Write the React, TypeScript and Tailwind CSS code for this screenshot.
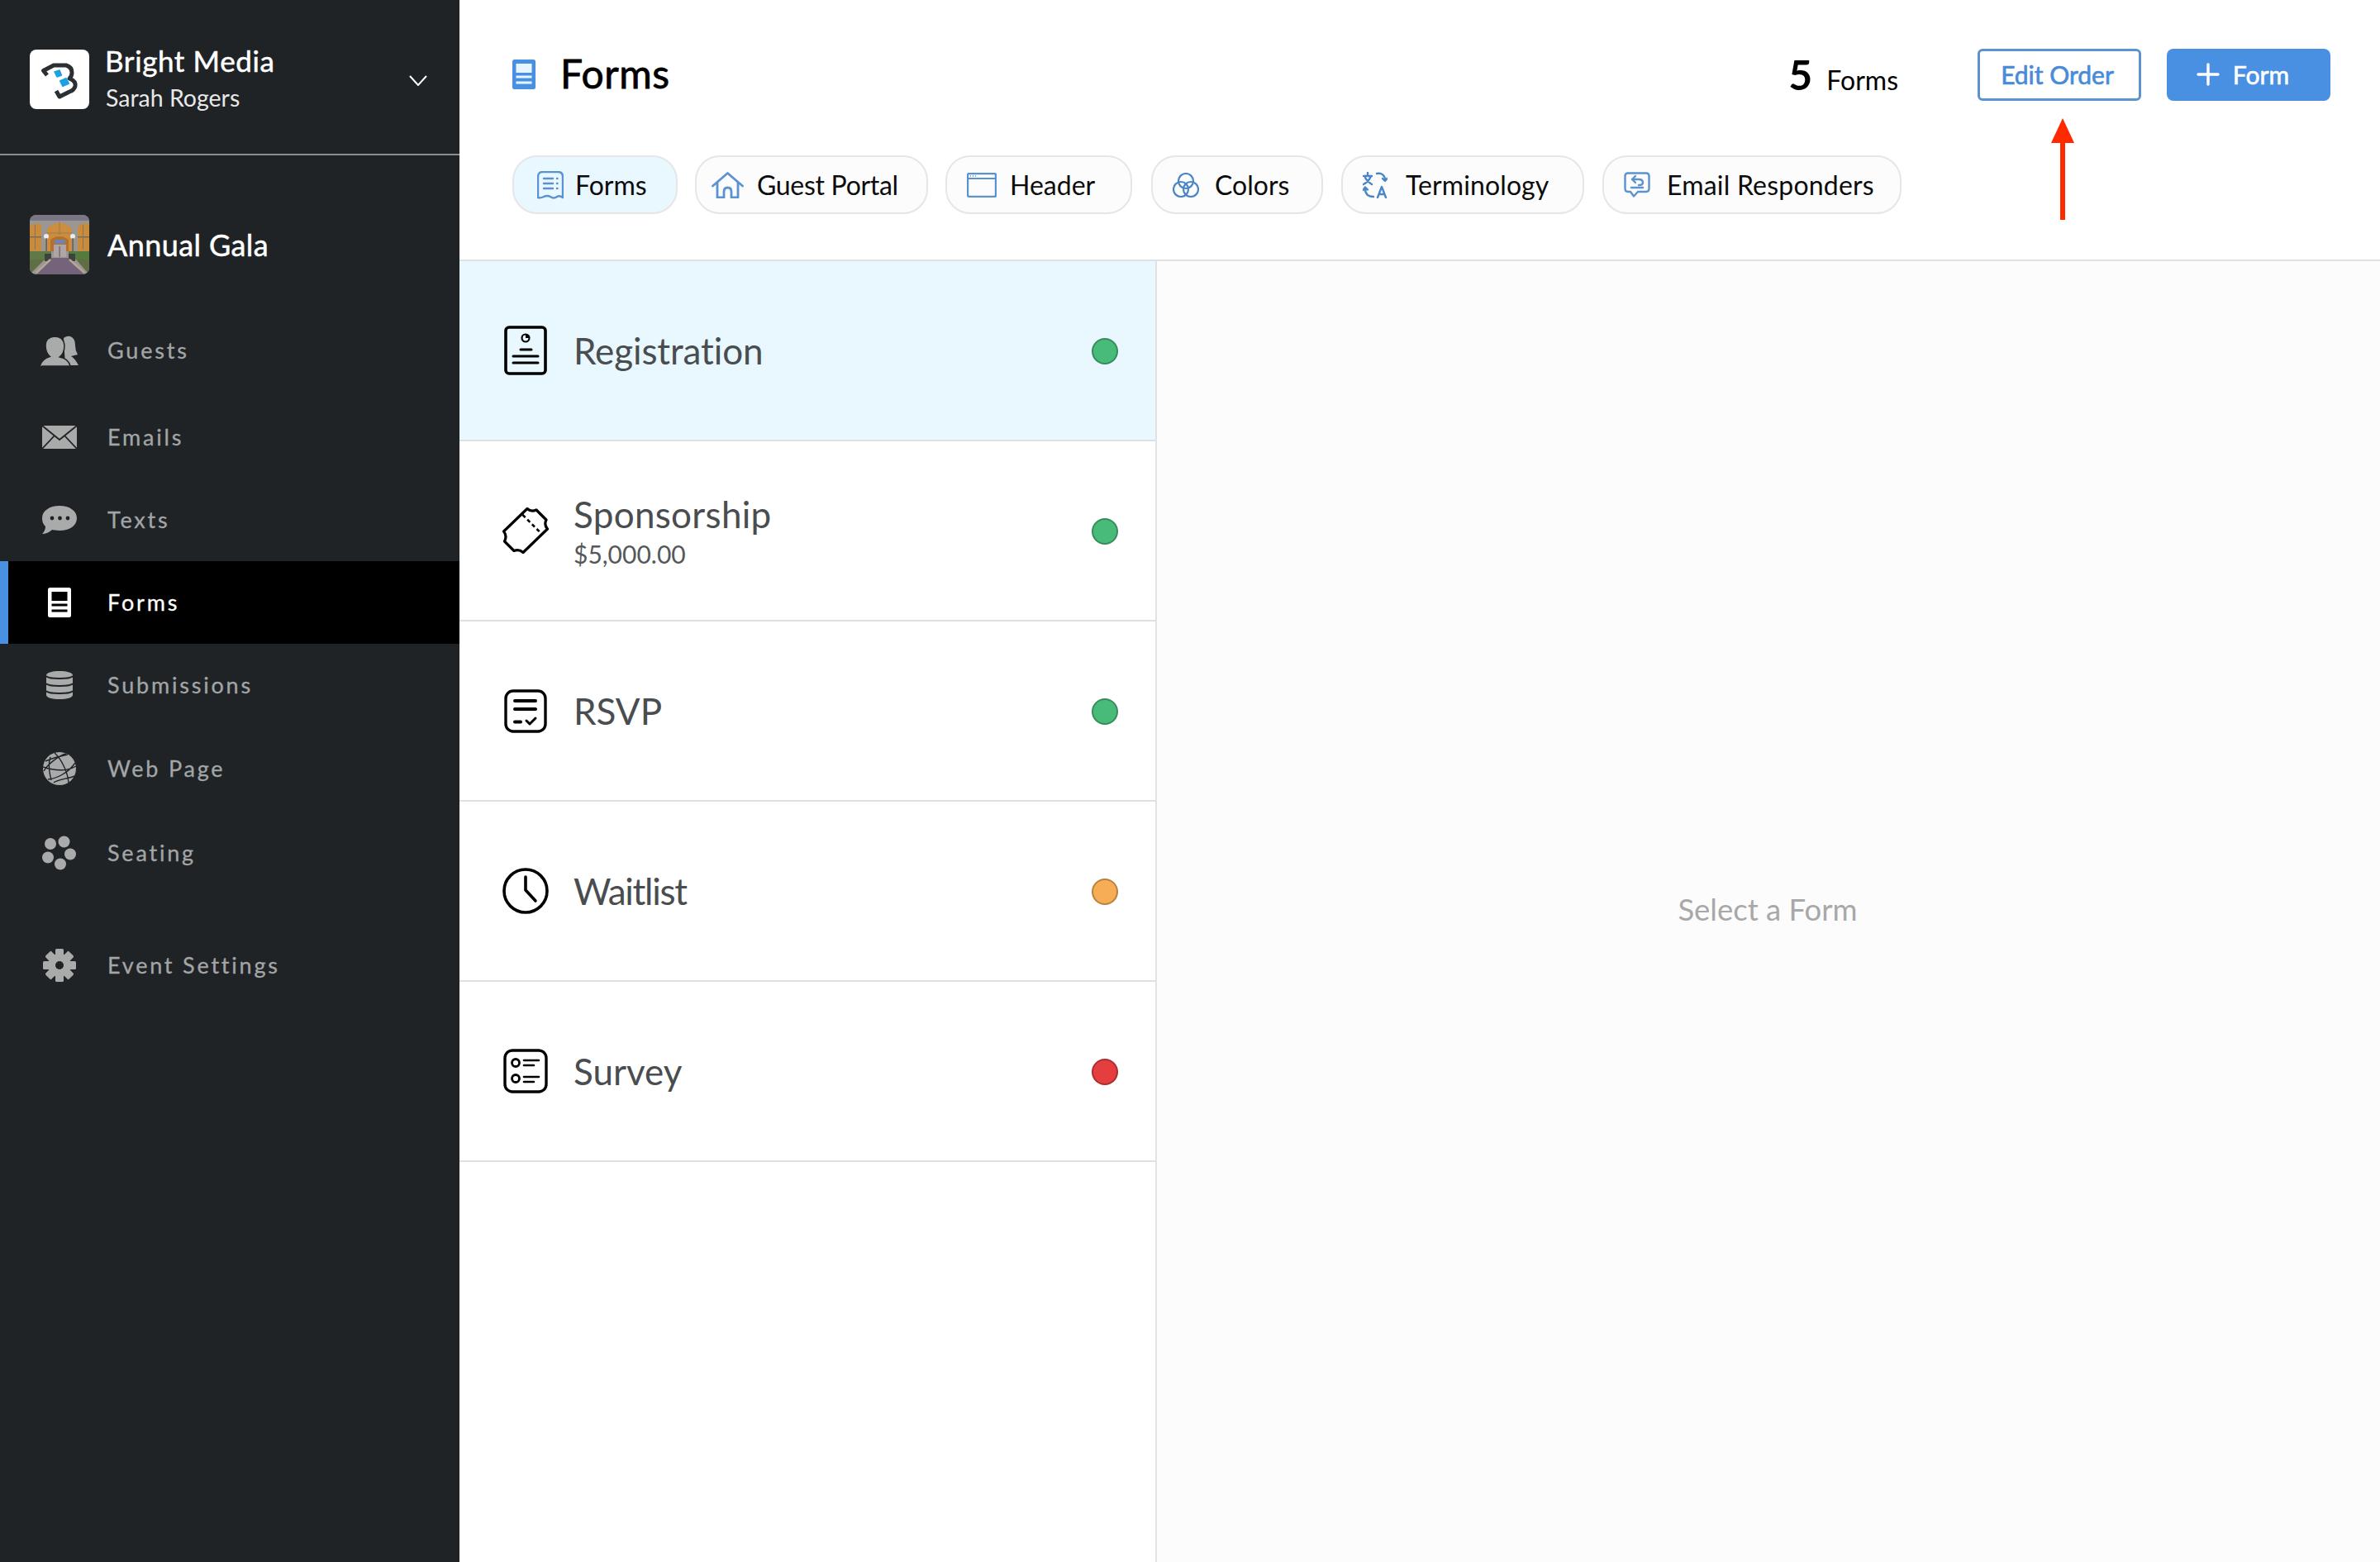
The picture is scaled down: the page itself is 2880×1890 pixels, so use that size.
import React from "react";

const SIDE = "#a9abab";
const DARK = "#1f2326";

function LogoMark() {
  return (
    <svg width="72" height="72" viewBox="0 0 72 72">
      <rect width="72" height="72" rx="8" fill="#fff" />
      <path d="M21 31 L16.5 25.5 L29 19 H44 Q51 21 51 28 Q51 32 48 35 Q56 38 55 44 Q54 49 48 51 L36 57 L32 50" fill="none" stroke="#2c3033" strokeWidth="5" strokeLinejoin="round" />
      <path d="M30 27 L36 25 L38.5 31 L33 33 Z" fill="#1ba3e0" stroke="#1ba3e0" strokeWidth="1.5" strokeLinejoin="round" />
      <path d="M37 38 L44 35 L47 41 L40 44 Z" fill="#1ba3e0" stroke="#1ba3e0" strokeWidth="2" strokeLinejoin="round" />
    </svg>
  );
}

function GalaThumb() {
  return (
    <svg width="72" height="72" viewBox="0 0 72 72">
      <defs>
        <clipPath id="galaclip"><rect width="72" height="72" rx="8" /></clipPath>
      </defs>
      <g clipPath="url(#galaclip)">
        <rect width="72" height="72" fill="#9a9694" />
        <rect width="72" height="7" fill="#7a7684" />
        <path d="M0 44 V14 Q7 8 14 12 V44 Z" fill="#c98c3c" />
        <path d="M21 44 V17 Q36 2 51 17 V44 Z" fill="#cc8d3c" />
        <path d="M25 30 Q36 22 47 30 V44 H25 Z" fill="#b5702f" />
        <path d="M58 44 V14 Q64 9 72 11 V44 Z" fill="#c98c3c" />
        <rect x="0" y="26" width="14" height="1.5" fill="#7d6a54" />
        <rect x="58" y="26" width="14" height="1.5" fill="#7d6a54" />
        <path d="M21 22 H51 M36 8 V24" stroke="#8a7860" strokeWidth="0.8" />
        <rect x="6" y="12" width="1" height="30" fill="#85745f" />
        <rect x="64" y="12" width="1" height="30" fill="#85745f" />
        <circle cx="20" cy="26" r="3" fill="#e8edf2" />
        <circle cx="52" cy="26" r="3" fill="#e8edf2" />
        <rect x="19.5" y="28" width="1.2" height="18" fill="#4a524c" />
        <rect x="51.5" y="28" width="1.2" height="18" fill="#4a524c" />
        <rect x="29" y="36" width="15" height="15" fill="#b0a4a4" />
        <rect x="30" y="30" width="13" height="5" fill="#6c84b0" />
        <rect x="35.5" y="38" width="1.2" height="13" fill="#6b6060" />
        <rect x="0" y="44" width="26" height="10" fill="#5f7a44" />
        <rect x="47" y="44" width="25" height="10" fill="#557a3e" />
        <rect x="18" y="47" width="8" height="9" fill="#3d423a" />
        <rect x="47" y="47" width="8" height="9" fill="#3d423a" />
        <path d="M0 54 H18 L2 70 H0 Z" fill="#5f6e44" />
        <path d="M72 54 H56 L70 70 H72 Z" fill="#5f6e44" />
        <path d="M26 52 H47 L67 72 H8 Z" fill="#75637b" />
        <path d="M25 54 L8 70" stroke="#b5a893" strokeWidth="2.5" />
        <path d="M48 54 L66 70" stroke="#b5a893" strokeWidth="2.5" />
      </g>
    </svg>
  );
}

function GuestsIcon() {
  return (
    <svg width="46" height="37" viewBox="0 0 46 37">
      <path d="M28 3 Q32 0 36 1 Q42 3 42 12 Q42 18 45 23 L37 25 Q42 28 46 36 H30 Z" fill={SIDE} />
      <path d="M17 1 Q28 1 29 12 Q29 22 23 26 Q34 28 36 37 H0 Q2 29 12 26 Q6 21 6 12 Q6 2 17 1 Z" fill={SIDE} stroke={DARK} strokeWidth="1.5" />
      <path d="M0 37 Q2 29 12 26 L23 26" fill={SIDE} />
    </svg>
  );
}

function EmailsIcon() {
  return (
    <svg width="42" height="28" viewBox="0 0 42 28">
      <rect width="42" height="28" fill={SIDE} />
      <path d="M0 0 L21 17 L42 0 M0 28 L15 12 M42 28 L27 12" fill="none" stroke={DARK} strokeWidth="1.8" />
    </svg>
  );
}

function TextsIcon() {
  return (
    <svg width="42" height="34" viewBox="0 0 42 34">
      <path d="M21 0 C33 0 42 6 42 15 C42 24 33 30 21 30 C17 30 14 29 12 29 C9 32 4 34 0 34 C3 31 4 28 4 25 C1 22 0 19 0 15 C0 6 9 0 21 0 Z" fill={SIDE} />
      <circle cx="12" cy="15" r="2.4" fill={DARK} />
      <circle cx="21.5" cy="15" r="2.4" fill={DARK} />
      <circle cx="31" cy="15" r="2.4" fill={DARK} />
    </svg>
  );
}

function DocIcon({ fill, cut }: { fill: string; cut: string }) {
  return (
    <svg width="28" height="36" viewBox="0 0 28 36">
      <rect width="28" height="36" rx="2.5" fill={fill} />
      <rect x="4.5" y="5" width="19" height="11" fill={cut} />
      <rect x="4.5" y="19.5" width="19" height="3" fill={cut} />
      <rect x="4.5" y="26.5" width="19" height="3" fill={cut} />
    </svg>
  );
}

function DbIcon() {
  return (
    <svg width="32" height="34" viewBox="0 0 32 34">
      <path d="M0 5 C0 2 7 0 16 0 C25 0 32 2 32 5 V29 C32 32 25 34 16 34 C7 34 0 32 0 29 Z" fill={SIDE} />
      <path d="M0 6 C2 10 30 10 32 6 M0 15 C2 19 30 19 32 15 M0 24 C2 28 30 28 32 24" fill="none" stroke={DARK} strokeWidth="2" />
    </svg>
  );
}

function GlobeIcon() {
  return (
    <svg width="40" height="40" viewBox="0 0 40 40">
      <circle cx="20" cy="20" r="20" fill={SIDE} />
      <path d="M3 11 C10 8 20 5 30 3 M1 23 C6 14 20 4 28 2 M14 1 C22 8 30 24 31 37 M0 18 C12 22 28 24 40 17 M6 33 C16 32 30 26 39 13 M13 37 C18 33 32 32 38 29 M9 6 C6 14 8 26 10 34" fill="none" stroke={DARK} strokeWidth="1.4" />
    </svg>
  );
}

function SeatingIcon() {
  return (
    <svg width="42" height="42" viewBox="0 0 42 42">
      <circle cx="10" cy="10" r="7" fill={SIDE} />
      <circle cx="26.5" cy="7.5" r="7" fill={SIDE} />
      <circle cx="34" cy="22.5" r="7" fill={SIDE} />
      <circle cx="22" cy="34.5" r="7" fill={SIDE} />
      <circle cx="7" cy="26.5" r="7" fill={SIDE} />
    </svg>
  );
}

function GearIcon() {
  const angles = [0, 45, 90, 135, 180, 225, 270, 315];
  return (
    <svg width="40" height="40" viewBox="0 0 40 40">
      {angles.map((a) => (
        <rect key={a} x="15" y="0" width="10" height="10" rx="1.5" fill={SIDE} transform={`rotate(${a} 20 20)`} />
      ))}
      <circle cx="20" cy="20" r="14" fill={SIDE} />
      <circle cx="20" cy="20" r="5" fill={DARK} />
    </svg>
  );
}

const BLUE = "#5b92d0";

function ReceiptIcon() {
  return (
    <svg width="32" height="34" viewBox="0 0 32 34" fill="none" stroke={BLUE} strokeWidth="2.4" strokeLinecap="round" strokeLinejoin="round">
      <path d="M1 32 V7 Q1 1 7 1 H25 Q31 1 31 7 V32 Q27 29 24 31 Q20 34 16 31 Q12 29 8 31 Q4 33 1 32 Z" />
      <path d="M8 9 H19 M8 15 H19 M8 21 H19" />
      <path d="M24 9 H24.5 M24 15 H24.5 M24 21 H24.5" />
    </svg>
  );
}

function HouseIcon() {
  return (
    <svg width="39" height="32" viewBox="0 0 39 32" fill="none" stroke={BLUE} strokeWidth="2.8" strokeLinecap="round" strokeLinejoin="round">
      <path d="M1.5 17 L19.5 1.5 L37.5 17" />
      <path d="M7 13 V31 H15 V24 Q15 19 19.5 19 Q24 19 24 24 V31 H32 V13" />
    </svg>
  );
}

function WindowIcon() {
  return (
    <svg width="36" height="30" viewBox="0 0 36 30" fill="none">
      <rect x="1" y="1" width="34" height="28" rx="2" stroke={BLUE} strokeWidth="2.4" />
      <path d="M1 7 H35" stroke={BLUE} strokeWidth="2" />
      <path d="M4 4 H5 M7 4 H8 M10 4 H11" stroke={BLUE} strokeWidth="1.4" />
    </svg>
  );
}

function ColorsIcon() {
  return (
    <svg width="32" height="30" viewBox="0 0 32 30" fill="none" stroke="#4a86c5" strokeWidth="2.2">
      <circle cx="16" cy="10" r="9" />
      <circle cx="10" cy="20" r="9" />
      <circle cx="22" cy="20" r="9" />
    </svg>
  );
}

function TermIcon() {
  return (
    <svg width="30" height="32" viewBox="0 0 30 32" fill="none" stroke="#4a86c5" strokeWidth="2.4" strokeLinecap="round" strokeLinejoin="round">
      <path d="M1 5 H11 M6 1 V5 M10 5 C8 10 5 13 1 15 M3 7 C5 11 8 13 11 15" />
      <path d="M17 2 C23 1 27 4 27 10 M24 8 L27 11 L29.5 8" />
      <path d="M13 30 C7 30 3 27 3 20 M0.5 22 L3 18.5 L6 21.5" />
      <path d="M18 31 L23 18 L28 31 M20 27 H26" />
    </svg>
  );
}

function ReplyIcon() {
  return (
    <svg width="32" height="31" viewBox="0 0 32 31" fill="none" stroke={BLUE} strokeWidth="2.4" strokeLinecap="round" strokeLinejoin="round">
      <path d="M5 1.5 H27 Q30.5 1.5 30.5 5 V20 Q30.5 24 27 24 H17 L12 29.5 L8 24 H5 Q1.5 24 1.5 20 V5 Q1.5 1.5 5 1.5 Z" />
      <path d="M14 5 L10 9 L14 13 M10 9 H18 Q23 9 23 13 Q23 16 18 16" />
      <path d="M9 19 H23" />
    </svg>
  );
}

function RegIcon() {
  return (
    <svg width="52" height="60" viewBox="0 0 52 60" fill="none" stroke="#000" strokeWidth="3.6" strokeLinecap="round">
      <rect x="2" y="2" width="48" height="56" rx="4" />
      <circle cx="26" cy="15" r="4.5" strokeWidth="2.2" />
      <path d="M26 15 L26 10.5 A4.5 4.5 0 0 1 30.5 15 Z" fill="#000" stroke="none" />
      <path d="M20 29 H33 M11 37 H41 M11 45 H41" strokeWidth="3" />
    </svg>
  );
}

function TicketIcon() {
  return (
    <svg width="56" height="56" viewBox="0 0 56 56" fill="none" stroke="#000" strokeWidth="3.2" strokeLinejoin="round">
      <path d="M30 1.5 Q35 6 41 3 L53 15 Q50 21 54.5 26 L25 54.5 Q20 50 14 52.5 L2.5 41 Q6 34 1.5 29 Z" />
      <path d="M24.5 9 L47 31.5" strokeWidth="2.6" strokeDasharray="4.5 3.5" />
    </svg>
  );
}

function RsvpIcon() {
  return (
    <svg width="52" height="53" viewBox="0 0 52 53" fill="none" stroke="#000" strokeWidth="3.4" strokeLinecap="round" strokeLinejoin="round">
      <rect x="2" y="2" width="48" height="49" rx="9" />
      <path d="M13 14 H38 M13 24 H38" strokeWidth="4" />
      <path d="M13 39.5 H20" strokeWidth="4" />
      <path d="M27 38 L31 42 L38 35" strokeWidth="3" />
    </svg>
  );
}

function ClockIcon() {
  return (
    <svg width="56" height="56" viewBox="0 0 56 56" fill="none" stroke="#000" strokeWidth="3.6" strokeLinecap="round" strokeLinejoin="round">
      <circle cx="28" cy="28" r="26" />
      <path d="M28 11 V27 L40 40" />
    </svg>
  );
}

function SurveyIcon() {
  return (
    <svg width="54" height="54" viewBox="0 0 54 54" fill="none" stroke="#000" strokeWidth="3.4" strokeLinecap="round">
      <rect x="2" y="2" width="50" height="50" rx="9" />
      <circle cx="15" cy="17" r="4.5" strokeWidth="2.8" />
      <circle cx="15" cy="36" r="4.5" strokeWidth="2.8" />
      <path d="M25 14 H43 M25 20 H37 M25 34 H43 M25 40 H37" strokeWidth="2.6" />
    </svg>
  );
}

const nav = [
  { label: "Guests", icon: <GuestsIcon />, cls: "mt-[42px]" },
  { label: "Emails", icon: <EmailsIcon />, cls: "mt-[5px]" },
  { label: "Texts", icon: <TextsIcon />, cls: "" },
  { label: "Forms", icon: <DocIcon fill="#ffffff" cut="#000000" />, cls: "", active: true },
  { label: "Submissions", icon: <DbIcon />, cls: "" },
  { label: "Web Page", icon: <GlobeIcon />, cls: "mt-[1px]" },
  { label: "Seating", icon: <SeatingIcon />, cls: "mt-[2px]" },
  { label: "Event Settings", icon: <GearIcon />, cls: "mt-[36px]" },
];

const pills = [
  { label: "Forms", icon: <ReceiptIcon />, w: "w-[200px] pl-[28px] gap-[14px] bg-[#e9f7ff]" },
  { label: "Guest Portal", icon: <HouseIcon />, w: "ml-[21px] w-[282px] pl-[18px] gap-[16px] tracking-[-0.3px] bg-[#fcfcfc]" },
  { label: "Header", icon: <WindowIcon />, w: "ml-[21px] w-[226px] pl-[24px] gap-[16px] bg-[#fcfcfc]" },
  { label: "Colors", icon: <ColorsIcon />, w: "ml-[23px] w-[208px] pl-[24px] gap-[19px] bg-[#fcfcfc]" },
  { label: "Terminology", icon: <TermIcon />, w: "ml-[22px] w-[294px] pl-[24px] gap-[22px] tracking-[0.1px] bg-[#fcfcfc]" },
  { label: "Email Responders", icon: <ReplyIcon />, w: "ml-[22px] w-[362px] pl-[24px] gap-[20px] tracking-[0.2px] bg-[#fcfcfc]" },
];

const rows = [
  { label: "Registration", icon: <RegIcon />, dot: "bg-[#48bb78]", bg: "bg-[#e9f7ff]", t: "tracking-[-0.1px]" },
  { label: "Sponsorship", sub: "$5,000.00", icon: <TicketIcon />, dot: "bg-[#48bb78]", bg: "", t: "tracking-[0.3px]" },
  { label: "RSVP", icon: <RsvpIcon />, dot: "bg-[#48bb78]", bg: "", t: "" },
  { label: "Waitlist", icon: <ClockIcon />, dot: "bg-[#f6ad55]", bg: "", t: "tracking-[-1.3px]" },
  { label: "Survey", icon: <SurveyIcon />, dot: "bg-[#e53e3e]", bg: "", t: "" },
];

export default function App() {
  return (
    <div className="flex h-screen w-full overflow-hidden bg-white font-['Lato',sans-serif] [font-variant-ligatures:none]">
      <aside className="flex w-[556px] shrink-0 flex-col bg-[#1f2326]">
        <div className="flex h-[188px] shrink-0 items-start border-b-2 border-[#8c8c8c] pl-[36px] pr-[39px] pt-[60px]">
          <LogoMark />
          <div className="ml-[19px] -mt-[9px] flex flex-col text-white">
            <span className="text-[35px] leading-[44px] tracking-[0.6px] [-webkit-text-stroke:0.5px_currentColor]">Bright Media</span>
            <span className="ml-[1px] mt-[6px] text-[28.5px] leading-[34px] text-[#e8e8e8]">Sarah Rogers</span>
          </div>
          <svg className="ml-auto mt-[31px]" width="22" height="13" viewBox="0 0 22 13" fill="none" stroke="#fff" strokeWidth="2">
            <path d="M1 1 L11 12 L21 1" />
          </svg>
        </div>
        <div className="mt-[72px] flex items-center pl-[36px]">
          <GalaThumb />
          <span className="ml-[22px] text-[36px] leading-none tracking-[0.4px] text-white [-webkit-text-stroke:0.5px_currentColor]">Annual Gala</span>
        </div>
        <nav className="flex flex-col">
          {nav.map((n) => (
            <div
              key={n.label}
              className={`flex h-[100px] items-center ${n.cls} ${n.active ? "border-l-[10px] border-[#4a90e2] bg-black pl-[38px] text-white" : "pl-[48px] text-[#a3a5a6]"}`}
            >
              <span className="flex w-[48px] justify-center">{n.icon}</span>
              <span className="ml-[34px] text-[27px] tracking-[2.8px] [-webkit-text-stroke:0.3px_currentColor]">{n.label}</span>
            </div>
          ))}
        </nav>
      </aside>

      <main className="relative flex min-w-0 flex-1 flex-col">
        <div className="flex h-[316px] shrink-0 flex-col border-b-2 border-[#dfe1e3] pl-[64px] pr-[60px]">
          <div className="mt-[58px] flex h-[64px] items-center">
            <DocIcon fill="#4a90e2" cut="#e8f6ff" />
            <span className="ml-[30px] -mt-[2px] text-[48px] tracking-[0.5px] text-black [-webkit-text-stroke:0.8px_currentColor]">Forms</span>
            <div className="ml-auto flex items-baseline gap-[17px] text-black">
              <span className="text-[50px] font-bold leading-none">5</span>
              <span className="mb-[1px] text-[32px] leading-none">Forms</span>
            </div>
            <button className="ml-[96px] flex h-[63px] w-[198px] items-center justify-center rounded-[6px] border-[3px] border-[#5b92d0] pr-[5px] text-[30px] text-[#4a8bd8] [-webkit-text-stroke:0.7px_currentColor]">
              Edit Order
            </button>
            <button className="ml-[31px] flex h-[63px] w-[198px] items-center justify-center gap-[16px] rounded-[8px] bg-[#4a90e2] pr-[14px] text-[30px] text-white [-webkit-text-stroke:0.6px_currentColor]">
              <svg width="28" height="28" viewBox="0 0 28 28" stroke="#fff" strokeWidth="3.4" strokeLinecap="round">
                <path d="M14 2 V26 M2 14 H26" />
              </svg>
              Form
            </button>
          </div>
          <div className="mt-[66px] flex">
            {pills.map((p) => (
              <div key={p.label} className={`flex h-[71px] items-center rounded-[30px] border-2 border-[#e6e6e6] text-[32px] text-[#0c0c0c] ${p.w}`}>
                {p.icon}
                <span>{p.label}</span>
              </div>
            ))}
          </div>
        </div>

        <svg className="absolute left-[1925px] top-[143px]" width="30" height="123" viewBox="0 0 30 123" fill="#ff2a00">
          <path d="M15 0 L29 30 H18 V123 H12 V30 H1 Z" />
        </svg>

        <div className="flex min-h-0 flex-1">
          <div className="w-[844px] shrink-0 border-r-2 border-[#e2e2e2] bg-white">
            {rows.map((r) => (
              <div key={r.label} className={`flex h-[218px] items-center border-b-2 border-[#dfdfdf] pl-[50px] pr-[45px] ${r.bg}`}>
                <span className="flex w-[60px] justify-center">{r.icon}</span>
                <div className="ml-[28px] flex flex-col">
                  <span className={`text-[44px] leading-[52px] text-[#4a4d50] ${r.t}`}>{r.label}</span>
                  {r.sub && <span className="mt-[4px] text-[30px] leading-[36px] text-[#55585a]">{r.sub}</span>}
                </div>
                <span className={`ml-auto mt-[1px] h-[32px] w-[32px] rounded-full border-2 border-[#00000040] ${r.dot}`} />
              </div>
            ))}
          </div>
          <div className="flex flex-1 items-center justify-center bg-[#fcfcfc]">
            <span className="mb-[6px] mr-[2px] text-[36.5px] text-[#a8a8a8]">Select a Form</span>
          </div>
        </div>
      </main>
    </div>
  );
}
